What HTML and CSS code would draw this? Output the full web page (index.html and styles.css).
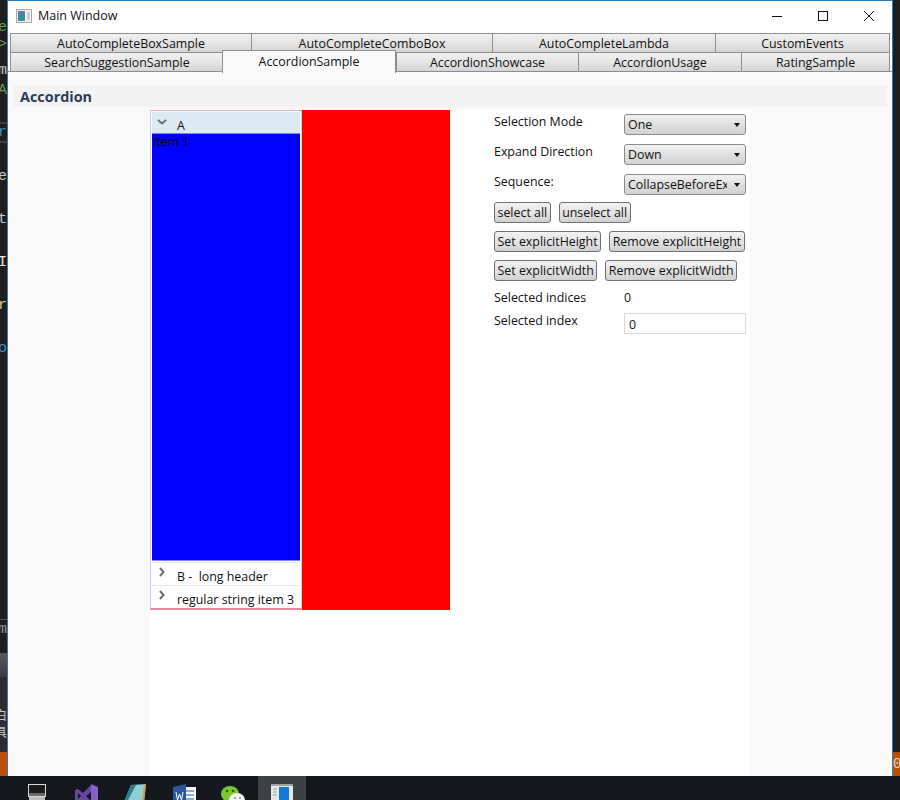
FILE: index.html
```html
<!DOCTYPE html>
<html lang="en">
<head>
  <meta charset="UTF-8">
  <meta name="viewport" content="width=device-width, initial-scale=1.0">
  <title>Main Window</title>
  <link rel="stylesheet" href="styles.css">
</head>
<body>
  <div class="desktop">
    <!-- code editor showing behind the window -->
    <div class="strip strip-left">
      <div class="editor">
        <span class="code c1 green">e</span>
        <span class="code c2 green">&gt;</span>
        <span class="code c3">m</span>
        <span class="code c4 green">A</span>
        <span class="code c5 blue">r</span>
        <span class="code c6">e</span>
        <span class="code c6b">t</span>
        <span class="code c6b red">I</span>
        <span class="code c6b tan">r</span>
        <span class="code c6b blue">o</span>
      </div>
      <div class="editor-output">
        <span class="code c7">m</span>
      </div>
      <div class="panel-head"></div>
      <div class="panel-body">
        <span class="code cjk c8">白</span>
        <span class="code cjk">具</span>
      </div>
      <div class="status-bar"></div>
    </div>

    <div class="window">
      <div class="titlebar">
        <svg class="app-icon" width="16" height="14" viewBox="0 0 16 14">
          <rect x="0.5" y="0.5" width="15" height="13" fill="#eef1f2" stroke="#a3a8ab"/>
          <rect x="2" y="2" width="7" height="10" fill="#3d8d96"/>
          <rect x="2" y="2" width="7" height="4" fill="#5a7fa8"/>
          <rect x="11" y="3" width="3" height="8" fill="#c7d0d3"/>
        </svg>
        <span class="title-text">Main Window</span>
        <div class="window-buttons">
          <svg class="win-btn" width="12" height="12" viewBox="0 0 12 12"><path d="M1 6.5h10" stroke="#111" fill="none"/></svg>
          <svg class="win-btn" width="12" height="12" viewBox="0 0 12 12"><rect x="1.5" y="1.5" width="9" height="9" stroke="#111" fill="none"/></svg>
          <svg class="win-btn" width="12" height="12" viewBox="0 0 12 12"><path d="M1 1l10 10M11 1L1 11" stroke="#111" fill="none"/></svg>
        </div>
      </div>

      <div class="tabs">
        <div class="tab-row row-top">
          <div class="tab">AutoCompleteBoxSample</div>
          <div class="tab">AutoCompleteComboBox</div>
          <div class="tab">AutoCompleteLambda</div>
          <div class="tab">CustomEvents</div>
        </div>
        <div class="tab-row row-bottom">
          <div class="tab">SearchSuggestionSample</div>
          <div class="tab selected">AccordionSample</div>
          <div class="tab">AccordionShowcase</div>
          <div class="tab">AccordionUsage</div>
          <div class="tab">RatingSample</div>
        </div>
      </div>

      <div class="content">
        <h2 class="section-head">Accordion</h2>
        <div class="sample">
          <div class="accordion-host">
            <div class="accordion">
              <div class="acc-header open">
                <svg class="chevron" width="10" height="6" viewBox="0 0 10 6"><path d="M1 1l4 3.5L9 1" stroke="#6f6f6f" stroke-width="2" fill="none"/></svg>
                <span>A</span>
              </div>
              <div class="acc-body">item 1</div>
              <div class="acc-header closed">
                <svg class="chevron" width="6" height="10" viewBox="0 0 6 10"><path d="M1 1l3.5 4L1 9" stroke="#6f6f6f" stroke-width="2" fill="none"/></svg>
                <span>B -&nbsp; long header</span>
              </div>
              <div class="acc-header closed last">
                <svg class="chevron" width="6" height="10" viewBox="0 0 6 10"><path d="M1 1l3.5 4L1 9" stroke="#6f6f6f" stroke-width="2" fill="none"/></svg>
                <span>regular string item 3</span>
              </div>
            </div>
            <div class="red-box"></div>
          </div>

          <div class="options">
            <div class="field field-mode">
              <label class="field-label">Selection Mode</label>
              <div class="combo"><span class="combo-text">One</span><i class="combo-arrow"></i></div>
            </div>
            <div class="field">
              <label class="field-label">Expand Direction</label>
              <div class="combo"><span class="combo-text">Down</span><i class="combo-arrow"></i></div>
            </div>
            <div class="field">
              <label class="field-label">Sequence:</label>
              <div class="combo"><span class="combo-text">CollapseBeforeExpand</span><i class="combo-arrow"></i></div>
            </div>
            <div class="btn-row first-row">
              <button class="btn">select all</button>
              <button class="btn">unselect all</button>
            </div>
            <div class="btn-row">
              <button class="btn">Set explicitHeight</button>
              <button class="btn">Remove explicitHeight</button>
            </div>
            <div class="btn-row">
              <button class="btn">Set explicitWidth</button>
              <button class="btn">Remove explicitWidth</button>
            </div>
            <div class="field field-indices">
              <label class="field-label">Selected indices</label>
              <span class="value">0</span>
            </div>
            <div class="field field-index">
              <label class="field-label">Selected index</label>
              <div class="textbox">0</div>
            </div>
          </div>
        </div>
      </div>
    </div>

    <div class="strip strip-right">
      <div class="status-bar"><span class="code status-digit">0</span></div>
    </div>
  </div>

  <div class="taskbar">
    <div class="task-item">
      <svg width="18" height="24" viewBox="0 0 18 24"><rect width="18" height="13" y="0" fill="#d8d8d8"/><rect x="1" y="1" width="16" height="11" fill="#1c1c1c"/><rect x="1" y="9" width="16" height="3" fill="#6a6a6a"/><rect x="1" y="13" width="16" height="4" fill="#bdbdbd"/></svg>
    </div>
    <div class="task-item">
      <svg width="23" height="24" viewBox="0 0 23 24"><path d="M16 0l7 3v18l-7 3z" fill="#8661c5"/><path d="M0 6l3-1 5 4 8-8v7l-5 4 5 5v7l-8-8-5 4-3-1zM3 9v6l3-3z" fill="#68489f"/></svg>
    </div>
    <div class="task-item">
      <svg width="22" height="24" viewBox="0 0 22 24"><path d="M7 1l15-1-2 18H0z" fill="#8fd0d8"/><path d="M7 1l5 0L3 18H0z" fill="#2f7f88"/><path d="M20 0h2l-2 18h-2z" fill="#c9a24a"/></svg>
    </div>
    <div class="task-item">
      <svg width="23" height="24" viewBox="0 0 23 24"><rect x="10" y="3" width="13" height="21" fill="#f3f6fa"/><path d="M13 7h8M13 11h8M13 15h8" stroke="#2b5fa8"/><path d="M0 3l13-3v24H0z" fill="#2b579a"/><path d="M3 8l1.5 8 2-6 2 6L10 8" stroke="#fff" fill="none"/></svg>
    </div>
    <div class="task-item">
      <svg width="24" height="24" viewBox="0 0 24 24"><ellipse cx="9" cy="10" rx="9" ry="8" fill="#7dc832"/><ellipse cx="16" cy="16" rx="8" ry="7" fill="#f2f2f2"/><circle cx="6" cy="7" r="1.3" fill="#2d5a12"/><circle cx="12" cy="7" r="1.3" fill="#2d5a12"/><circle cx="14" cy="14" r="1" fill="#888"/><circle cx="19" cy="14" r="1" fill="#888"/></svg>
    </div>
    <div class="task-item active">
      <svg width="22" height="24" viewBox="0 0 22 24"><rect width="22" height="24" fill="#e4e8ea"/><rect x="0" y="0" width="22" height="2" fill="#9aa3a8"/><rect x="8" y="3" width="10" height="21" fill="#1479d6"/><path d="M2 5h4M2 8h4M2 11h4" stroke="#9aa3a8"/></svg>
    </div>
  </div>
</body>
</html>
```

FILE: styles.css
```css
* {
  box-sizing: border-box;
}
html, body {
  height: 100%;
}
body {
  margin: 0;
  display: flex;
  flex-direction: column;
  overflow: hidden;
  background-color: #1e1e1e;
  font-family: "Open Sans", "Noto Sans", Arial, sans-serif;
  font-size: 12.4px;
  color: #111;
}
.desktop {
  flex: 0 0 776px;
  display: flex;
  height: 776px;
}

/* bits of the editor behind the window */
.strip {
  flex: none;
  display: flex;
  flex-direction: column;
  overflow: hidden;
  background-color: #1e1e1e;
}
.strip-left {
  width: 7px;
}
.strip-right {
  width: 7px;
}
.strip-right .status-bar {
  margin-top: auto;
}
.editor {
  flex: 0 0 619px;
  display: flex;
  flex-direction: column;
  padding-top: 16px;
}
.editor-output {
  flex: 0 0 35px;
  border-top: 1px solid #555;
  border-bottom: 1px solid #555;
  padding-top: 1px;
}
.panel-head {
  flex: 0 0 23px;
  background: linear-gradient(#5a5a5a, #3a3a3e);
}
.panel-body {
  flex: 1;
  display: flex;
  flex-direction: column;
  background-color: #2d2d30;
}
.status-bar {
  flex: 0 0 24px;
  height: 24px;
  background-color: #b85000;
}
.code {
  display: flex;
  justify-content: flex-end;
  flex: none;
  height: 17px;
  line-height: 17px;
  font-family: "Liberation Mono", "DejaVu Sans Mono", monospace;
  font-size: 15px;
  color: #c8c8c8;
  white-space: nowrap;
}
.cjk {
  font-family: "Noto Sans CJK SC", sans-serif;
  font-size: 12px;
}
.green { color: #6a9955; }
.blue { color: #3c8fd0; }
.red { color: #e6e6e6; }
.tan { color: #d6c39a; }
.c1 { margin-top: 3px; }
.c2 { margin-top: 0; }
.c3 { margin-top: 9px; }
.c4 { margin-top: 3px; }
.c5 {
  margin-top: 23px;
  height: 21px;
  line-height: 17px;
  border-top: 2px solid #3f3f3f;
  border-bottom: 2px solid #3f3f3f;
}
.c6 { margin-top: 25px; }
.c6b { margin-top: 26px; }
.c7 { margin-top: 0; color: #9a9a9a; }
.c8 { margin-top: 29px; }
.status-digit {
  font-size: 14px;
  line-height: 24px;
  height: 24px;
  justify-content: flex-start;
  color: #e8d0c0;
}

/* window */
.window {
  flex: none;
  width: 886px;
  display: flex;
  flex-direction: column;
  background-color: #fff;
  border: 1px solid #2b7cc4;
  border-bottom: none;
}
.titlebar {
  flex: 0 0 32px;
  display: flex;
  align-items: center;
  padding: 0 0 3px 8px;
}
.app-icon {
  margin-right: 6px;
}
.title-text {
  font-size: 12.5px;
}
.window-buttons {
  margin-left: auto;
  display: flex;
  gap: 34px;
  padding-right: 17px;
}
.tabs {
  flex: none;
  padding: 0 2px 0 2px;
}
.tab-row {
  display: grid;
  height: 19px;
}
.row-top {
  grid-template-columns: 241px 241px 223px 1fr;
}
.row-bottom {
  grid-template-columns: 213px 173px 182px 163px 1fr;
}
.tab {
  height: 20px;
  line-height: 19px;
  text-align: center;
  white-space: nowrap;
  background: linear-gradient(#f0f0f0, #e5e5e5 50%, #d5d5d5);
  border: 1px solid #8c8e94;
  margin-right: -1px;
}
.tab:last-child {
  margin-right: 0;
}
.tab.selected {
  position: relative;
  z-index: 2;
  height: 23px;
  margin-top: -2px;
  margin-left: -1px;
  margin-right: 0;
  line-height: 21px;
  background: #f9f9f9;
  border-bottom: none;
}
.content {
  flex: 1;
  min-height: 0;
  display: flex;
  flex-direction: column;
  background-color: #f9f9f9;
  border-top: 1px solid #8c8e94;
  padding: 13px 5px 0 6px;
}
.section-head {
  flex: none;
  margin: 0 0 3px 0;
  height: 22px;
  line-height: 24px;
  padding-left: 6px;
  background-color: #f3f3f3;
  font-size: 14.4px;
  font-weight: 700;
  color: #2e3a5c;
}
.sample {
  flex: 1;
  width: 600px;
  margin-left: 136px;
  display: flex;
  background-color: #fff;
}

/* accordion */
.accordion-host {
  flex: 0 0 300px;
  height: 500px;
  display: flex;
  background-color: #fff;
}
.accordion {
  width: 152px;
  display: flex;
  flex-direction: column;
  padding: 1px;
  border-top: 1px solid #eeb0bd;
  border-bottom: 2px solid #e9889c;
  border-left: 1px solid #ccccf0;
  border-right: 1px solid #ccccf0;
}
.acc-header {
  flex: none;
  display: flex;
  position: relative;
  height: 23px;
  padding-left: 25px;
  align-items: center;
  background-color: #fff;
}
.acc-header span {
  padding-top: 5px;
}
.chevron {
  position: absolute;
  left: 5px;
  top: 7px;
}
.closed .chevron {
  left: 7px;
  top: 4px;
}
.open {
  height: 22px;
  background-color: #dcebf3;
  border-bottom: 1px solid #8080ff;
}
.closed {
  border-top: 1px solid #e8e8ee;
}
.last {
  height: 22px;
}
.acc-body {
  flex: 1;
  background-color: #0000ff;
  line-height: 16px;
  padding-left: 1px;
  color: #000;
  border-bottom: 1px solid #8080ff;
  margin-bottom: 1px;
}
.red-box {
  flex: 0 0 148px;
  background-color: #ff0000;
}

/* right hand form */
.options {
  margin-left: 44px;
  width: 252px;
  display: flex;
  flex-direction: column;
}
.field {
  display: grid;
  grid-template-columns: 130px 122px;
  margin-top: 9px;
}
.field-mode {
  margin-top: 4px;
}
.field-label {
  line-height: 16px;
}
.combo {
  display: flex;
  align-items: center;
  height: 21px;
  padding: 0 5px 0 3px;
  background: linear-gradient(#f2f2f2, #dcdcdc 60%, #d2d2d2);
  border: 1px solid #8a8a8a;
  border-radius: 3px;
}
.combo-text {
  flex: 1;
  min-width: 0;
  overflow: hidden;
  white-space: nowrap;
  margin-right: 7px;
}
.combo-arrow {
  flex: none;
  width: 0;
  height: 0;
  border-left: 3.5px solid transparent;
  border-right: 3.5px solid transparent;
  border-top: 4px solid #111;
}
.btn-row {
  display: flex;
  gap: 8px;
  margin-top: 8px;
}
.first-row {
  margin-top: 7px;
}
.btn {
  height: 21px;
  padding: 0 2.5px;
  font: inherit;
  color: #111;
  white-space: nowrap;
  background: linear-gradient(#f2f2f2, #e0e0e0 60%, #d0d0d0);
  border: 1px solid #707070;
  border-radius: 3px;
}
.field-indices {
  margin-top: 9px;
}
.field-index {
  margin-top: 7px;
}
.value {
  line-height: 16px;
}
.textbox {
  height: 21px;
  line-height: 21px;
  padding-left: 4px;
  background-color: #fff;
  border: 1px solid #d8d8d8;
}

/* taskbar */
.taskbar {
  flex: 0 0 24px;
  height: 24px;
  display: flex;
  padding-left: 13px;
  overflow: hidden;
  background-color: #14181d;
}
.task-item {
  flex: none;
  width: 48px;
  height: 24px;
  padding-top: 8px;
  display: flex;
  justify-content: center;
  overflow: hidden;
  margin-right: 1px;
}
.active {
  background-color: #3f4244;
}
```
